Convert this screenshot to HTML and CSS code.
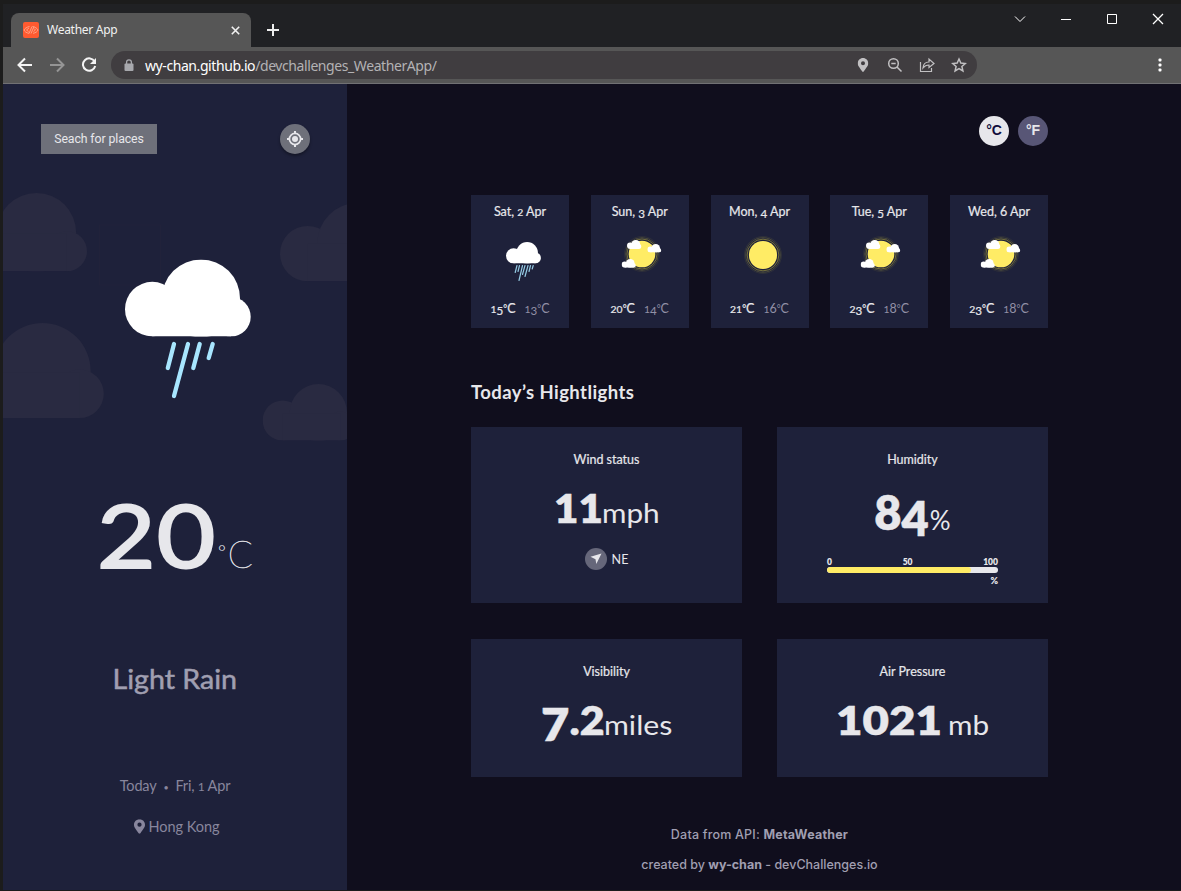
FILE: index.html
```html
<!DOCTYPE html>
<html lang="en">
<head>
<meta charset="utf-8">
<title>Weather App</title>
<link rel="stylesheet" href="styles.css">
</head>
<body>
<svg class="defs" width="0" height="0">
  <symbol id="cloud" viewBox="0 0 126 77">
    <circle cx="27.3" cy="49.7" r="27.3"/><circle cx="76" cy="39" r="39"/><circle cx="106" cy="57.3" r="19.7"/><path d="M27.3 40H106V77H27.3z"/>
  </symbol>
  <symbol id="sun" viewBox="0 0 40 40">
    <circle cx="20" cy="20" r="14.8" fill="#ffec65"/>
    <g fill="none" stroke="#c8bb3e"><circle cx="20" cy="20" r="16.7" stroke-width=".7" opacity=".8"/><circle cx="20" cy="20" r="18.2" stroke-width=".6" opacity=".45"/><circle cx="20" cy="20" r="19.5" stroke-width=".5" opacity=".2"/></g>
  </symbol>
  <symbol id="partly" viewBox="0 0 44 46">
    <use href="#sun" x="6" y="0" width="36" height="36"/>
    <g fill="#fff"><use href="#cloud" x="9" y="4" width="14.5" height="8.9"/><use href="#cloud" x="29.3" y="8" width="14" height="8.5"/><use href="#cloud" x="3.6" y="23" width="14.3" height="8.7"/></g>
  </symbol>
  <symbol id="pin" viewBox="0 0 12 16">
    <path fill-rule="evenodd" d="M6 0C2.6 0 0 2.6 0 6c0 2.500.8 3.300 5.200 9.500.4.600 1.200.600 1.600 0C11.200 9.300 12 8.500 12 6c0-3.400-2.600-6-6-6zm0 3.700a2.300 2.300 0 1 1 0 4.600 2.300 2.300 0 0 1 0-4.600z"/>
  </symbol>
</svg>
<div class="window">
  <header class="tabs">
    <div class="tab">
      <svg class="favicon" width="16" height="16" viewBox="0 0 16 16"><rect width="16" height="16" rx="2" fill="#ff5a30"/><g fill="none" stroke="#ffa78c" stroke-width=".9"><path d="M6.500 4.500C4 5 1.500 6.500 1 8c.5 1.500 2.500 3 5 3.300M9.500 4.500C12 5 14.500 6.500 15 8c-.5 1.500-2.500 3-5 3.300M9 4.500l-3 7M11 4.500l-3 7M6 6 3.500 8l2 1.500M10.500 9.500l2-1.500-1.500-1.500"/></g></svg>
      <span class="tab-title">Weather App</span>
      <svg class="tab-close" width="9" height="9" viewBox="0 0 9 9"><path d="M.8.8l7.400 7.400M8.200.8.8 8.200"/></svg>
    </div>
    <svg class="new-tab" width="12" height="12" viewBox="0 0 12 12"><path d="M6 0v12M0 6h12"/></svg>
    <div class="win-controls">
      <svg width="12" height="12" viewBox="0 0 12 12"><path d="M1 3.500l5 5 5-5"/></svg>
      <svg width="12" height="12" viewBox="0 0 12 12"><path d="M1 6.500h10"/></svg>
      <svg width="12" height="12" viewBox="0 0 12 12"><path d="M1.500 1.500h9v9h-9z"/></svg>
      <svg width="12" height="12" viewBox="0 0 12 12"><path stroke-width="1.300" d="M1 1l10 10M11 1 1 11"/></svg>
    </div>
  </header>
  <nav class="toolbar">
    <svg class="nav" width="16" height="16" viewBox="0 0 16 16"><path d="M15 8H2M8 1.500 1.500 8 8 14.500"/></svg>
    <svg class="nav dim" width="16" height="16" viewBox="0 0 16 16"><path d="M1 8h13M8 1.500 14.500 8 8 14.500"/></svg>
    <svg class="nav" width="16" height="16" viewBox="0 0 16 16"><path d="M13.600 4.600A6.200 6.200 0 1 0 14.200 9"/><path class="fill" d="M15 1v6H9z"/></svg>
    <div class="address">
      <svg class="lock" width="10" height="13" viewBox="0 0 10 13"><rect x=".5" y="4.500" width="9" height="7.500" rx="1"/><path d="M2.600 5V3.200a2.400 2.400 0 0 1 4.800 0V5" fill="none" stroke="#a7a8ad" stroke-width="1.300"/></svg>
      <span class="url"><b>wy-chan.github.io</b>/devchallenges_WeatherApp/</span>
      <div class="actions">
        <svg width="16" height="16" viewBox="0 0 16 16"><use href="#pin" x="2.500" y="1" width="11" height="14" fill="#c1c0c2"/></svg>
        <svg width="16" height="16" viewBox="0 0 16 16"><circle cx="6.500" cy="6.500" r="4.800"/><path d="M10 10l4.500 4.500M4.300 6.500h4.400"/></svg>
        <svg width="16" height="16" viewBox="0 0 16 16"><path stroke-width="1.200" d="M1.500 5v9.500h11V11M4 11c.3-4 2.500-6 6-6V2l5 4.500-5 4V8C7.500 8 5.500 9 4 11z"/></svg>
        <svg width="16" height="16" viewBox="0 0 16 16"><path d="M8 2l1.800 4.100 4.500.4-3.400 3 1 4.400L8 11.600l-3.900 2.300 1-4.400-3.400-3 4.500-.4z"/></svg>
      </div>
    </div>
    <svg class="more" width="4" height="14" viewBox="0 0 4 14"><rect x=".5" y=".5" width="3" height="3" rx="1"/><rect x=".5" y="5.500" width="3" height="3" rx="1"/><rect x=".5" y="10.500" width="3" height="3" rx="1"/></svg>
  </nav>
  <div class="page">
    <aside class="side">
      <div class="side-top">
        <button class="search">Seach for places</button>
        <button class="locate"><svg width="16" height="16" viewBox="0 0 16 16"><circle cx="8" cy="8" r="5.600" fill="none" stroke="#e7e7eb" stroke-width="1.700"/><circle cx="8" cy="8" r="3"/><path d="M7 0h2v3H7zM7 13h2v3H7zM0 7h3v2H0zM13 7h3v2h-3z"/></svg></button>
      </div>
      <svg class="hero" width="344" height="260" viewBox="3 190 344 260">
        <rect x="99.500" y="225" width="61" height="60" fill="none" stroke="#21223a"/>
        <g fill="#292a41"><use href="#cloud" x="-40.700" y="193" width="128" height="78.200"/><use href="#cloud" x="280" y="203.300" width="127.500" height="78"/><use href="#cloud" x="-51.300" y="323" width="155.500" height="95"/><use href="#cloud" x="262.600" y="384" width="92.500" height="56.500"/></g>
        <use href="#cloud" x="125" y="259.400" width="126" height="77.100" fill="#fff"/>
        <path d="M174 344l-6.200 24M188 344l-14 52M199.700 344l-6.400 24M212.700 344l-4 14" stroke="#a8e6ff" stroke-width="4.300" stroke-linecap="round"/>
      </svg>
      <div class="temp"><span class="num">20</span><span class="unit"><i>°</i>C</span></div>
      <div class="state">Light Rain</div>
      <div class="today">Today<span class="dot">•</span>Fri, <span class="x">1</span> Apr</div>
      <div class="place"><svg width="11" height="15" viewBox="0 0 12 16"><use href="#pin" width="12" height="16"/></svg><span>Hong Kong</span></div>
    </aside>
    <main class="main">
      <div class="units"><button class="on">°C</button><button>°F</button></div>
      <section class="days">
        <article class="day"><h3>Sat, <span class="x">2</span> Apr</h3>
          <svg width="44" height="46" viewBox="0 0 44 46"><use href="#cloud" x="8" y="6" width="35" height="21.500" fill="#fff"/><path d="M19 29.500l-1.800 7M21.500 29.500l-1.500 6M24.500 29.500l-3.500 15M27 29.500l-2.500 9M30 29.500l-3 11M32.500 29.500l-1.500 6M35.200 29.500l-1 3.500" stroke="#a8e6ff" stroke-width="1.200" opacity=".85" stroke-linecap="round" fill="none"/></svg>
          <p><span class="hi"><span class="x">1</span><span class="d">5</span><i>°</i>C</span><span class="lo"><span class="x">1</span><span class="d">3</span><i>°</i>C</span></p></article>
        <article class="day"><h3>Sun, <span class="d">3</span> Apr</h3>
          <svg width="44" height="46"><use href="#partly" width="44" height="46"/></svg>
          <p><span class="hi"><span class="x">20</span><i>°</i>C</span><span class="lo"><span class="x">1</span><span class="d">4</span><i>°</i>C</span></p></article>
        <article class="day"><h3>Mon, <span class="d">4</span> Apr</h3>
          <svg width="44" height="46"><use href="#sun" x="6" y="0" width="38" height="38"/></svg>
          <p><span class="hi"><span class="x">21</span><i>°</i>C</span><span class="lo"><span class="x">1</span>6<i>°</i>C</span></p></article>
        <article class="day"><h3>Tue, <span class="d">5</span> Apr</h3>
          <svg width="44" height="46"><use href="#partly" width="44" height="46"/></svg>
          <p><span class="hi"><span class="x">2</span><span class="d">3</span><i>°</i>C</span><span class="lo"><span class="x">1</span>8<i>°</i>C</span></p></article>
        <article class="day"><h3>Wed, 6 Apr</h3>
          <svg width="44" height="46"><use href="#partly" width="44" height="46"/></svg>
          <p><span class="hi"><span class="x">2</span><span class="d">3</span><i>°</i>C</span><span class="lo"><span class="x">1</span>8<i>°</i>C</span></p></article>
      </section>
      <h2>Today’s Hightlights</h2>
      <section class="cards">
        <article class="card"><h4>Wind status</h4>
          <div class="value"><b class="v-wind">11</b><span class="u-mph">mph</span></div>
          <div class="dir"><span class="compass"><svg width="12" height="12" viewBox="0 0 12 12"><path d="M11.500.5 6.300 11 5.500 6.300.5 3.800z"/></svg></span><span>NE</span></div>
        </article>
        <article class="card"><h4>Humidity</h4>
          <div class="value humidity"><b class="v-hum">8<span class="desc">4</span></b><span class="u-pct">%</span></div>
          <div class="meter"><div class="scale"><span>0</span><span>50</span><span>100</span></div><div class="track"><div class="bar" style="width:84%"></div></div><div class="pct">%</div></div>
        </article>
        <article class="card"><h4>Visibility</h4>
          <div class="value"><b class="v-vis"><span class="desc tall">7</span>.2</b><span class="u-miles">miles</span></div>
        </article>
        <article class="card"><h4>Air Pressure</h4>
          <div class="value"><b class="v-air">1021</b><span class="u-mb">mb</span></div>
        </article>
      </section>
      <footer><p class="f1">Data from API: <b>MetaWeather</b></p><p class="f2">created by <b>wy-chan</b> - devChallenges.io</p></footer>
    </main>
  </div>
</div>
</body>
</html>
```
FILE: styles.css
```css
* { box-sizing: border-box; }
body, h2, h3, h4, p { margin: 0; }
button { border: 0; padding: 0; }
svg { display: block; flex: none; }
i { font-style: normal; }
.defs { position: absolute; }
body { width: 1181px; height: 891px; overflow: hidden; background: #1c1c1c; font-family: Lato, sans-serif; color: #e7e7eb; }
.window { display: flex; flex-direction: column; height: 890px; margin-left: 3px; padding-top: 4px; }

.tabs { display: flex; height: 43px; background: #202124; padding-left: 8px; }
.tab { display: flex; align-items: center; width: 240px; height: 34px; margin-top: 9px; padding: 0 11px 0 12px; border-radius: 8px 8px 0 0; background: #565656; }
.tab-title { flex: 1; margin: 0 0 1px 8px; font: 12px "Noto Sans", sans-serif; letter-spacing: -.27px; color: #f1f1f1; }
.tab-close { stroke: #f1f1f1; stroke-width: 1.6; }
.new-tab { margin: 20px 0 0 16px; stroke: #eee; stroke-width: 2; }
.win-controls { display: flex; gap: 34px; margin: 9px 17px 0 auto; }
.win-controls svg { fill: none; stroke: #fff; stroke-width: 1; }

.toolbar { display: flex; align-items: center; height: 37px; background: #565656; border-bottom: 1px solid #717174; padding: 0 19px 0 14px; }
.nav { margin-right: 16px; fill: none; stroke: #f4f4f4; stroke-width: 2; }
.nav .fill { fill: #f4f4f4; stroke: none; }
.nav.dim { stroke: #959595; }
.address { display: flex; align-items: center; width: 866px; height: 28px; margin-left: -2px; padding: 0 10px 0 13px; border-radius: 14px; background: #403d40; }
.lock { fill: #a7a8ad; }
.url { margin-left: 11px; font: 14px "Noto Sans", sans-serif; letter-spacing: -.42px; color: #b3b2b4; white-space: nowrap; }
.url b { font-weight: 400; color: #fff; }
.actions { display: flex; gap: 16px; margin-left: auto; }
.actions svg { fill: none; stroke: #c1c0c2; stroke-width: 1.5; }
.actions use { stroke: none; }
.more { margin-left: auto; fill: #fff; }

.page { display: flex; flex: 1; min-height: 0; }
.side { width: 344px; background: #1e213a; display: flex; flex-direction: column; align-items: center; }
.side-top { display: flex; justify-content: space-between; align-self: stretch; height: 106px; padding: 40px 37px 0 38px; }
.search { width: 116px; height: 30px; background: #6e707a; color: #e7e7eb; font: 12.3px Roboto, sans-serif; letter-spacing: -.1px; }
.locate { display: grid; place-items: center; width: 30px; height: 30px; border-radius: 50%; background: #6e707a; box-shadow: 0 2px 3px rgba(0,0,0,.35); }
.locate svg { fill: #e7e7eb; }
.temp { display: flex; align-items: baseline; height: 120px; line-height: 120px; margin-top: 25px; }
.num { font-size: 87px; letter-spacing: 1px; -webkit-text-stroke: 2.2px #e7e7eb; transform: scaleX(1.16); transform-origin: left; margin-right: 18px; }
.unit { font-size: 37px; font-weight: 100; -webkit-text-stroke: .45px #e7e7eb; }
.unit i { margin-right: 2px; font-size: 19px; vertical-align: 9px; }
.state { margin-top: 66px; height: 36px; line-height: 36px; font-size: 27px; color: #a09fb1; transform: scaleX(1.06); -webkit-text-stroke: .5px #a09fb1; }
.today { display: flex; margin-top: 79px; height: 20px; line-height: 20px; font-size: 14.500px; letter-spacing: -.2px; white-space: pre; color: #88869d; align-items: baseline; }
.dot { margin: 0 7px; font-size: 9px; }
.place { display: flex; align-items: center; gap: 4px; margin-top: 20px; margin-left: 3px; height: 20px; font-size: 14.500px; color: #88869d; letter-spacing: -.05px; }
.place svg { fill: #88869d; }
.x { font-size: .83em; }
.d { font-size: .93em; vertical-align: -.16em; }

.main { flex: 1; background: #100e1d; padding: 32px 133px 0 124px; }
.units { display: flex; justify-content: flex-end; gap: 9px; }
.units button { width: 30px; height: 30px; padding-bottom: 2px; border-radius: 50%; background: #585676; color: #e7e7eb; font: bold 14px "Liberation Sans", sans-serif; letter-spacing: -.2px; }
.units .on { background: #e7e7eb; color: #110e3c; }
.days { display: flex; justify-content: space-between; margin-top: 49px; }
.day { display: flex; flex-direction: column; align-items: center; width: 98px; height: 133px; padding-top: 8px; background: #1e213a; }
.day h3, .card h4, .hi { -webkit-text-stroke: .2px #e7e7eb; }
.day h3 { height: 18px; line-height: 18px; font-size: 12.500px; font-weight: 400; white-space: nowrap; }
.day svg { margin-top: 15px; }
.day p { display: flex; gap: 9px; height: 18px; line-height: 18px; margin-top: 18px; font-size: 12.500px; }
.day i { font-size: .75em; vertical-align: .15em; }
.lo { color: #9290a6; }
h2 { height: 24px; line-height: 24px; margin: 52px 0 23px; font-size: 18.500px; letter-spacing: .42px; font-weight: 700; }
.cards { display: grid; grid-template: 176px 138px / 271px 271px; gap: 36px 35px; }
.card { display: flex; flex-direction: column; align-items: center; padding-top: 23px; background: #1e213a; }
.card h4 { height: 20px; line-height: 20px; font-size: 12.500px; font-weight: 400; }
.value { display: flex; align-items: baseline; height: 56px; line-height: 56px; margin-top: 10px; white-space: nowrap; }
.value b { font-size: 39px; font-weight: 800; transform-origin: left; -webkit-text-stroke: .4px #e7e7eb; }
.value > span { font-size: 27px; transform-origin: left; transform: scaleX(1.1); }
.value .v-wind { transform: scaleX(1.08); margin-right: 3px; }
.value .u-mph { margin-right: 5px; }
.value.humidity { margin-top: 14px; }
.value .v-hum { font-size: 47px; }
.value .u-pct { font-size: 26px; margin-left: 1px; transform: none; }
.value .v-vis { transform: scaleX(1.1); margin-right: 5px; }
.value .u-miles { transform: scaleX(1.12); margin-right: 7px; }
.value .v-air { transform: scaleX(1.17); margin-right: 21px; }
.value .u-mb { margin-right: 4px; }
.desc { vertical-align: -6px; }
.tall { font-size: 1.14em; }
.dir { display: flex; align-items: center; gap: 5px; height: 22px; margin-top: 12px; font-size: 12.500px; }
.compass { display: grid; place-items: center; width: 22px; height: 22px; border-radius: 50%; background: #66677a; }
.compass svg { fill: #e7e7eb; }
.meter { width: 171px; margin-top: 16px; font-size: 9px; font-weight: 800; }
.scale { display: flex; justify-content: space-between; height: 11px; line-height: 12px; }
.track { height: 6px; border-radius: 3px; background: #e7e7eb; overflow: hidden; }
.bar { height: 6px; border-radius: 3px; background: #ffec65; }
.scale span { font-size: 8.500px; }
.pct { text-align: right; line-height: 16px; }
footer { margin-top: 48px; text-align: center; color: #a09fb1; font: 500 12.500px Inter, sans-serif; }
footer p { height: 20px; line-height: 20px; margin-bottom: 10px; white-space: nowrap; }
.f1 { letter-spacing: .2px; }
```
